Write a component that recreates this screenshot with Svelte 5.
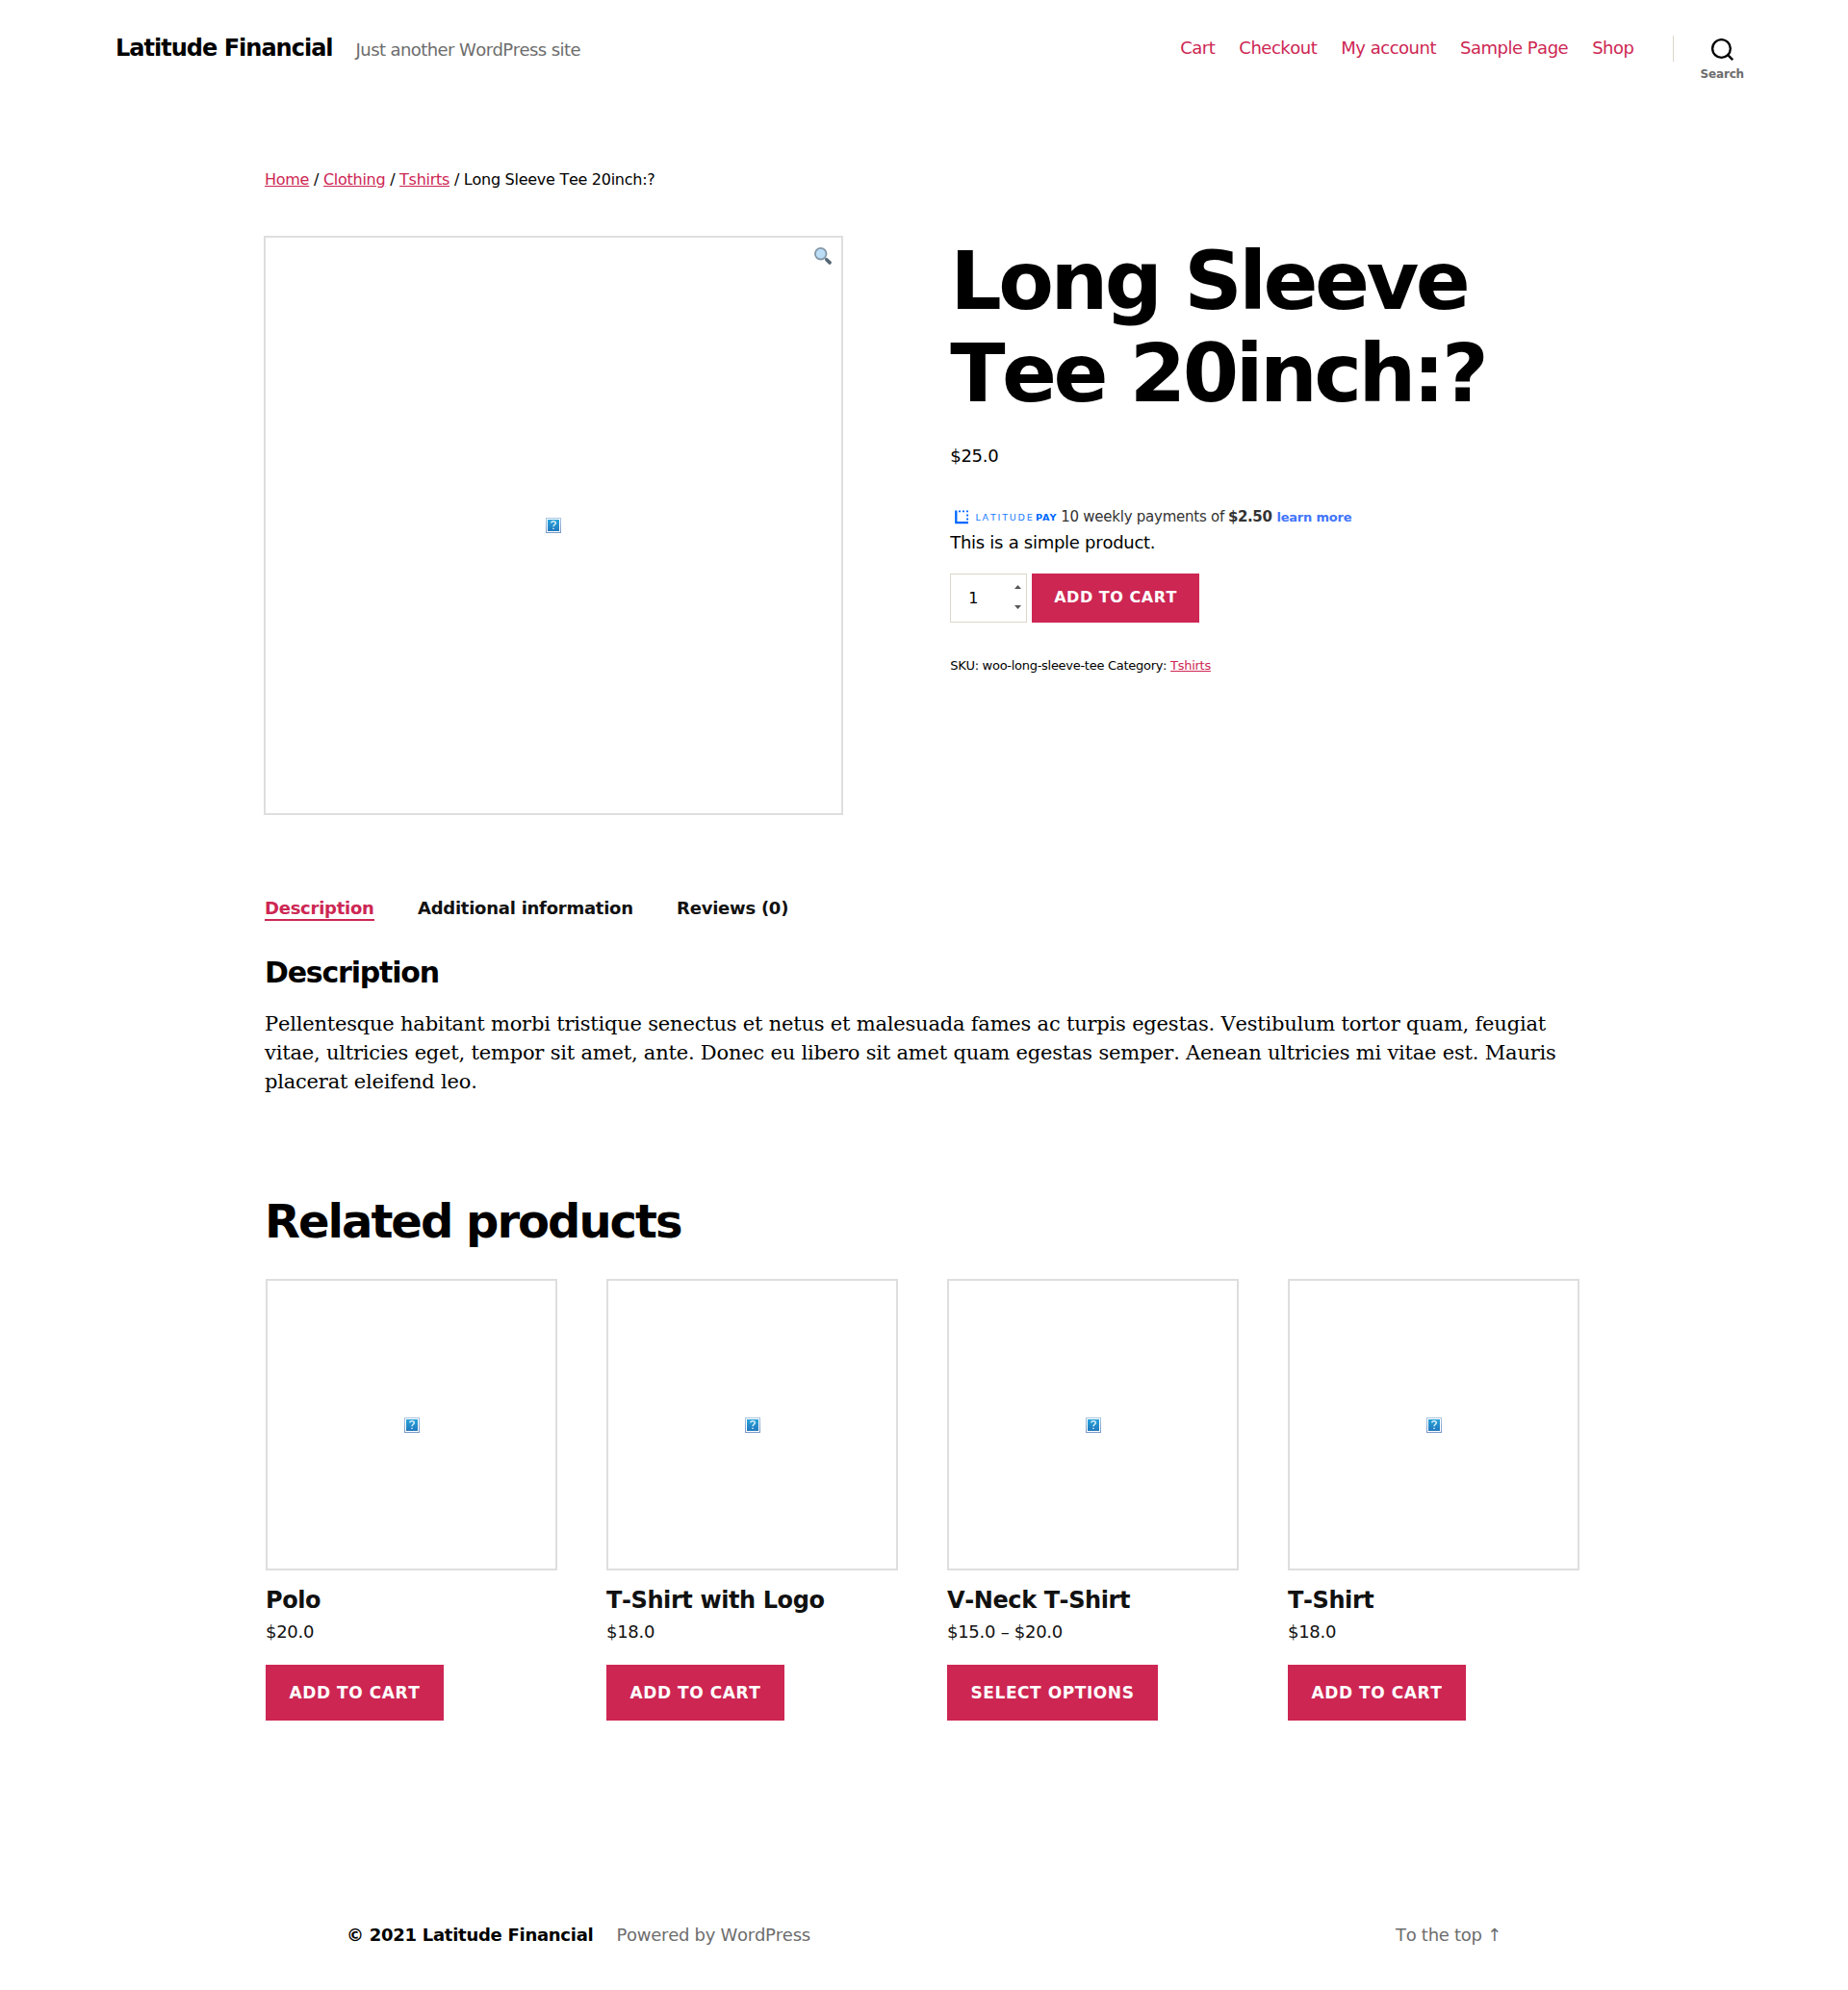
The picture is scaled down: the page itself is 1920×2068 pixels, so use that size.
<script>
  const nav = ['Cart', 'Checkout', 'My account', 'Sample Page', 'Shop'];
  const products = [
    { name: 'Polo', price: '$20.0', action: 'Add to cart' },
    { name: 'T-Shirt with Logo', price: '$18.0', action: 'Add to cart' },
    { name: 'V-Neck T-Shirt', price: '$15.0 – $20.0', action: 'Select options' },
    { name: 'T-Shirt', price: '$18.0', action: 'Add to cart' }
  ];
</script>

{#snippet placeholder()}
  <svg class="placeholder" width="16" height="16" viewBox="0 0 16 16" aria-hidden="true">
    <defs>
      <linearGradient id="ph-fill" x1="0" y1="0" x2="0" y2="1">
        <stop offset="0" stop-color="#2aa3d9" />
        <stop offset="1" stop-color="#2079bd" />
      </linearGradient>
      <linearGradient id="ph-edge" x1="0" y1="0" x2="0" y2="1">
        <stop offset="0" stop-color="#a9c6e2" />
        <stop offset="1" stop-color="#7795c6" />
      </linearGradient>
    </defs>
    <rect width="16" height="16" fill="url(#ph-edge)" />
    <rect x="1" y="1" width="14" height="14" fill="#fff" />
    <rect x="2" y="2" width="12" height="12" fill="url(#ph-fill)" />
    <path d="M5.8 5.6C5.8 3 10.3 3 10.3 5.6C10.3 7.3 8 7.3 8 9.3M8 10.8V12.1" fill="none" stroke="#d8eefa" stroke-width="1.5" />
  </svg>
{/snippet}

<div class="page">
  <header class="site-header">
    <div class="titles">
      <a class="site-title" href="#home">Latitude Financial</a>
      <span class="tagline">Just another WordPress site</span>
    </div>
    <div class="header-nav">
      <nav>
        {#each nav as item}<a href="#nav">{item}</a>{/each}
      </nav>
      <button class="search" type="button">
        <svg width="23" height="23" viewBox="0 0 23 23" aria-hidden="true">
          <circle cx="10.5" cy="10.5" r="9.35" fill="none" stroke="#000" stroke-width="2.35" />
          <path d="M16.9 16.9L22.2 22.2" stroke="#000" stroke-width="2.35" />
        </svg>
        <span>Search</span>
      </button>
    </div>
  </header>

  <main>
    <nav class="breadcrumb"><a href="#home">Home</a> / <a href="#clothing">Clothing</a> / <a href="#tshirts">Tshirts</a> / Long Sleeve Tee 20inch:?</nav>

    <div class="product">
      <div class="frame gallery">
        {@render placeholder()}
        <svg class="zoom" width="20" height="20" viewBox="0 0 20 20" aria-hidden="true">
          <path d="M12.2 12.2L14 14" stroke="#7d909f" stroke-width="2" />
          <path d="M14 14L17 16.9" stroke="#566875" stroke-width="3.8" stroke-linecap="round" />
          <circle cx="7.7" cy="7.7" r="5.8" fill="#bbddf6" stroke="#8296a6" stroke-width="1.8" />
        </svg>
      </div>

      <div class="summary">
        <h1>Long Sleeve Tee 20inch:?</h1>
        <p class="price">$25.0</p>
        <div class="latitude">
          <svg class="logo" width="106" height="15" viewBox="0 0 106 15" role="img" aria-label="LatitudePay">
            <path d="M1.3 0.5V13.2H14" fill="none" stroke="#0068ff" stroke-width="2.3" />
            <path d="M4 1.4H14M13.1 4.4V11" fill="none" stroke="#0068ff" stroke-width="1.9" stroke-dasharray="2 2" />
            <text class="light" x="21.5" y="10.6" textLength="61" lengthAdjust="spacingAndGlyphs">LATITUDE</text>
            <text class="heavy" x="84" y="10.6" textLength="21.5" lengthAdjust="spacingAndGlyphs">PAY</text>
          </svg>
          <span class="weekly">10 weekly payments of</span>
          <b>$2.50</b>
          <a href="#learn">learn more</a>
        </div>
        <p class="short">This is a simple product.</p>
        <form class="cart">
          <div class="qty">
            <span>1</span>
            <svg width="7" height="25" viewBox="0 0 7 25" aria-hidden="true">
              <path d="M0 4L3.5 0L7 4ZM0 21L3.5 25L7 21Z" fill="#555" />
            </svg>
          </div>
          <button class="btn single" type="button">Add to cart</button>
        </form>
        <p class="meta">SKU: woo-long-sleeve-tee Category: <a href="#tshirts">Tshirts</a></p>
      </div>
    </div>

    <div class="tabs">
      <a class="active" href="#description">Description</a>
      <a href="#info">Additional information</a>
      <a href="#reviews">Reviews (0)</a>
    </div>

    <section class="description">
      <h2>Description</h2>
      <p>Pellentesque habitant morbi tristique senectus et netus et malesuada fames ac turpis egestas. Vestibulum tortor quam, feugiat vitae, ultricies eget, tempor sit amet, ante. Donec eu libero sit amet quam egestas semper. Aenean ultricies mi vitae est. Mauris placerat eleifend leo.</p>
    </section>

    <section class="related">
      <h2>Related products</h2>
      <div class="grid">
        {#each products as p}
          <article>
            <div class="frame">{@render placeholder()}</div>
            <h3>{p.name}</h3>
            <p>{p.price}</p>
            <button class="btn" type="button">{p.action}</button>
          </article>
        {/each}
      </div>
    </section>
  </main>

  <footer>
    <div><b>© 2021 Latitude Financial</b><span>Powered by WordPress</span></div>
    <a href="#top">To the top ↑</a>
  </footer>
</div>

<style>
  :global(body) { margin: 0; background: #fff; }
  * { box-sizing: border-box; }
  .page {
    height: 2068px;
    display: flex;
    flex-direction: column;
    overflow: hidden;
    font-family: "DejaVu Sans", sans-serif;
    font-size: 18px;
    line-height: 27px;
    letter-spacing: -0.27px;
    font-kerning: none;
    color: #000;
  }
  h1, h2, h3, p { margin: 0; }
  a { color: #cd2653; }
  button { font-family: inherit; border: 0; cursor: pointer; font-kerning: none; }

  .site-header {
    height: 100px;
    padding: 0 80px 0 120px;
    display: flex;
    align-items: center;
    justify-content: space-between;
  }
  .titles { display: flex; align-items: baseline; gap: 24px; }
  .site-title { font-size: 24px; font-weight: 700; line-height: 32px; letter-spacing: -0.99px; color: #000; text-decoration: none; }
  .tagline { color: #6d6d6d; letter-spacing: -0.58px; }
  .header-nav { display: flex; align-items: center; }
  .header-nav nav { display: flex; gap: 25px; margin-right: 40px; padding-bottom: 2px; letter-spacing: -0.49px; }
  .header-nav nav a { text-decoration: none; }
  .search {
    height: 27px;
    width: 102.5px;
    padding: 3px 0 0;
    border-left: 1px solid #dcd7ca;
    background: none;
    display: flex;
    flex-direction: column;
    align-items: center;
    font-size: 12px;
    font-weight: 700;
    line-height: 14px;
    letter-spacing: -0.18px;
    color: #6d6d6d;
  }
  .search svg { flex: none; }
  .search span { margin-top: 7px; }

  main { width: 1370px; margin: 74px auto 0; flex: 1; }
  .breadcrumb { font-size: 16px; line-height: 25px; letter-spacing: -0.27px; }

  .product { display: flex; margin-top: 46px; gap: 111.4px; margin-left: -1px; }
  .frame { position: relative; display: flex; align-items: center; justify-content: center; border: 2px solid #dedede; }
  .placeholder { display: block; }
  .gallery { width: 602px; height: 602px; }
  .zoom { position: absolute; right: 9px; top: 9px; }
  .summary { width: 658px; }
  h1 { width: 600px; font-size: 84px; line-height: 95.6px; letter-spacing: -3.49px; font-weight: 700; }
  .price { margin-top: 24px; }
  .latitude { display: flex; align-items: baseline; height: 26px; margin-top: 37px; padding-left: 5px; line-height: 26px; font-size: 15px; letter-spacing: -0.245px; color: #333; }
  .logo { align-self: center; margin-right: 4px; font-size: 8px; }
  .light { fill: #1a7cff; letter-spacing: 1.5px; }
  .heavy { fill: #0068ff; font-weight: 700; letter-spacing: 0; }
  .latitude b { margin: 0 5px 0 4px; letter-spacing: -0.4px; }
  .latitude a { font-size: 13px; font-weight: 700; letter-spacing: -0.21px; color: #4275fb; text-decoration: none; }
  .cart { display: flex; gap: 5px; margin-top: 19px; height: 51px; }
  .qty { width: 80px; border: 1px solid #dcd7ca; display: flex; justify-content: space-between; align-items: center; padding: 0 5px 0 18px; font-size: 16px; line-height: 24px; }
  .qty svg { margin-bottom: 2px; }
  .btn {
    display: block;
    height: 58px;
    padding: 0 24.5px;
    background: #cd2653;
    color: #fff;
    font-size: 17px;
    font-weight: 700;
    line-height: 20px;
    letter-spacing: 0.566px;
    text-transform: uppercase;
    white-space: nowrap;
  }
  .single { height: 51px; padding: 0 23px 2px; font-size: 16px; letter-spacing: 0.53px; }
  .meta { margin-top: 32px; font-size: 13px; line-height: 26px; letter-spacing: -0.28px; }

  .tabs { display: flex; gap: 45.3px; margin-top: 82px; font-weight: 700; letter-spacing: -0.25px; }
  .tabs a { color: #111; text-decoration: none; line-height: 29px; height: 28px; }
  .tabs .active { color: #cd2653; border-bottom: 2px solid #cd2653; }
  .description h2 { margin-top: 35px; font-size: 30px; line-height: 38px; letter-spacing: -1.2px; }
  .description p { margin-top: 19px; font-family: "DejaVu Serif", serif; font-size: 21px; line-height: 30px; letter-spacing: -0.205px; }
  .related h2 { margin-top: 100px; font-size: 48px; line-height: 60px; letter-spacing: -1.99px; }
  .grid { display: grid; grid-template-columns: repeat(4, 303px); gap: 51px; margin-top: 30px; padding-left: 1px; }
  .grid .frame { height: 303px; }
  h3 { margin-top: 16px; font-size: 24px; line-height: 30px; letter-spacing: -0.4px; color: #111; }
  article p { margin-top: 4px; color: #111; }
  article .btn { margin-top: 21px; }

  footer { width: 1200px; margin: 0 auto; height: 85px; padding-top: 14px; display: flex; justify-content: space-between; }
  footer span { margin-left: 24px; color: #6d6d6d; }
  footer a { color: #6d6d6d; text-decoration: none; }
</style>
